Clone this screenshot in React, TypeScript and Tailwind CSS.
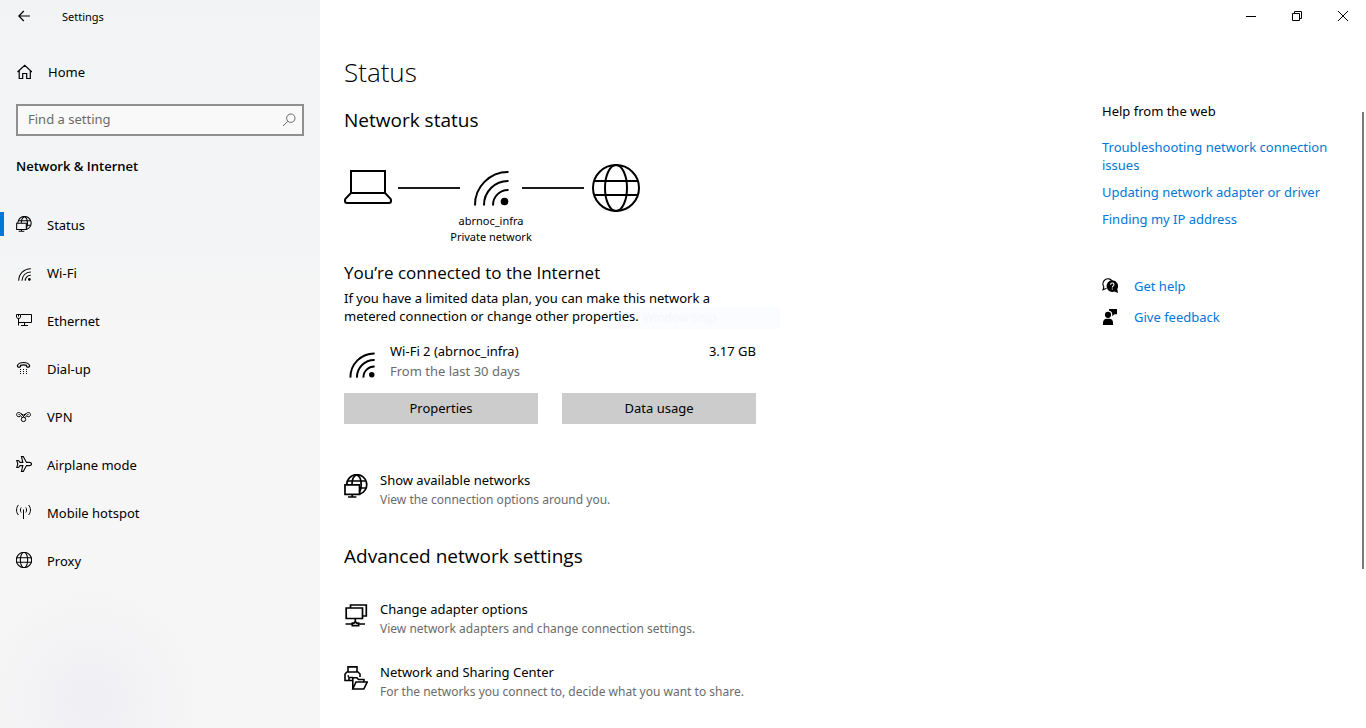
import type { ReactNode, SVGProps } from "react";

function Svg({ children, ...rest }: SVGProps<SVGSVGElement>) {
  return (
    <svg fill="none" stroke="currentColor" aria-hidden="true" {...rest}>
      {children}
    </svg>
  );
}

function WifiIcon({ className, weight }: { className: string; weight: number }) {
  return (
    <Svg viewBox="0 0 36 36" className={className} strokeWidth={weight}>
      <path d="M2 35.5A33 33 0 0 1 35.5 2M11 35.5A24 24 0 0 1 35.5 11M20 35.5A15 15 0 0 1 35.5 20" />
      <circle cx="31.5" cy="31.5" r="3.8" fill="currentColor" stroke="none" />
    </Svg>
  );
}

function GlobeIcon({ className, weight }: { className: string; weight: number }) {
  return (
    <Svg viewBox="0 0 48 48" className={className} strokeWidth={weight}>
      <circle cx="24" cy="24" r="23" />
      <ellipse cx="24" cy="24" rx="11" ry="23" />
      <path d="M2 17H46M2 31H46" />
    </Svg>
  );
}

function NetworkIcon({ className, weight }: { className: string; weight: number }) {
  return (
    <Svg viewBox="0 0 24 24" className={className} strokeWidth={weight}>
      <path d="M2.7 10.5A10 10 0 1 1 15.5 20.2" />
      <path d="M8 10.5C8 6 9.6 2 12.6 1C15.6 2 17.2 6 17.2 10.5C17.2 14 16.8 16.5 15.5 18.5M3.5 7H21.5M16 14H21.7" />
      <path d="M1 10.8H15.5V20.3H1ZM8.2 20.3V23M4 23H12.4" />
    </Svg>
  );
}

function LaptopIcon() {
  return (
    <Svg viewBox="0 0 48 48" className="size-12" strokeWidth="2">
      <path d="M7 7H41V29H7Z" />
      <path d="M7 29L1.6 34.6Q1 35.3 1 36.2V37Q1 39 3 39H45Q47 39 47 37V36.2Q47 35.3 46.4 34.6L41 29" />
    </Svg>
  );
}

const navItems: { label: string; icon: ReactNode }[] = [
  { label: "Status", icon: <NetworkIcon className="size-4" weight={1.6} /> },
  { label: "Wi-Fi", icon: <WifiIcon className="mt-1 ml-0.5 size-[13px]" weight={2.8} /> },
  {
    label: "Ethernet",
    icon: (
      <Svg viewBox="0 0 16 16" className="size-4">
        <path d="M5 2.5H15.5V10.5H2.5M8.5 10.5V13.5M5 13.5H12M2.5 6.5V13.5" />
        <path d="M.5 2.5H4.5V5L3.5 6.5H1.5L.5 5ZM2.5 2.5V4.5" />
      </Svg>
    ),
  },
  {
    label: "Dial-up",
    icon: (
      <Svg viewBox="0 0 16 16" className="size-4" strokeWidth="1.2">
        <path d="M1.5 6.5V5.2C2.6 3.3 5 2.5 7.500 2.500S12.400 3.300 13.500 5.200V6.500L12.800 7.200H11.200L10.500 6.500V5.400C8.800 4.700 6.200 4.700 4.500 5.400V6.500L3.800 7.200H2.200Z" />
        <path d="M4 9.500H5M7 9.500H8M10 9.500H11M4 11.500H5M7 11.500H8M10 11.500H11M4 13.500H5M7 13.500H8M10 13.500H11" />
      </Svg>
    ),
  },
  {
    label: "VPN",
    icon: (
      <Svg viewBox="0 0 16 16" className="size-4">
        <path d="M4.100 8.300C2.600 9.500 .6 8.400 .6 6.600C.6 4.200 3.800 3.800 5 5.700L8.300 9.300M11.100 8.300C12.600 9.400 14.500 8.400 14.500 6.600C14.500 4.200 11.400 3.800 10.200 5.700L6.700 9.300" />
        <path d="M2.500 6.500C3.200 5.900 3.800 6.700 4.300 7.400L6 9.500M12.600 6.500C11.900 5.900 11.400 6.700 10.900 7.400L9.200 9.500M5 5.700L7.500 7L10.200 5.700" />
        <circle cx="7.500" cy="11.400" r="2.200" />
      </Svg>
    ),
  },
  {
    label: "Airplane mode",
    icon: (
      <Svg viewBox="0 0 16 16" className="size-4" strokeWidth="1.1">
        <path d="M5.500 .6H7.300L10.500 6.400H13.500C14.700 6.400 15.500 7.200 15.500 8S14.700 9.600 13.500 9.600H10.500L7.300 15.400H5.500L6.800 9.600H4L2.500 11.500H.8L1.800 8L.8 4.500H2.500L4 6.400H6.800Z" />
      </Svg>
    ),
  },
  {
    label: "Mobile hotspot",
    icon: (
      <Svg viewBox="0 0 16 16" className="size-4">
        <path d="M7.500 5.500V15M5.200 3.500C4.200 4.800 4.200 7.200 5.200 8.500M9.800 3.500C10.800 4.800 10.800 7.200 9.800 8.500M2.500 1C-.1 3.500 -.1 8.500 2.500 11M12.500 1C15.100 3.500 15.100 8.500 12.500 11" />
      </Svg>
    ),
  },
  { label: "Proxy", icon: <GlobeIcon className="size-4" weight={3.2} /> },
];

function Sidebar() {
  return (
    <aside className="flex w-80 shrink-0 flex-col bg-[#f6f6f6] bg-[radial-gradient(circle_at_90px_700px,#efeff4,transparent_110px),linear-gradient(to_bottom,#f2f3f5,#f3f4f6_200px,transparent_340px)]">
      <header className="flex h-8 items-center">
        <button aria-label="Back" className="flex h-8 w-12 items-center justify-center">
          <Svg viewBox="0 0 12 12" className="size-3" strokeWidth="1.2">
            <path d="M12 6H.8M5.800 1L.8 6L5.800 11" />
          </Svg>
        </button>
        <span className="pt-0.5 pl-3.5 text-[11px] leading-4">Settings</span>
      </header>
      <a href="#home" className="mt-4 flex h-12 items-center gap-4 pl-4">
        <Svg viewBox="0 0 16 16" className="size-4" strokeWidth="1.200">
          <path d="M1.500 8L8.700 1.200L16 8M3.200 6.500V14.500H6.700V9.500H10.700V14.500H14.300V6.500" />
        </Svg>
        <span className="pt-0.5">Home</span>
      </a>
      <label className="mx-4 mt-2 flex h-8 items-center border-2 border-[#8f8f8f] bg-[#f9f9f9] pr-1.5 pl-2.5">
        <input
          type="text"
          aria-label="Find a setting"
          placeholder="Find a setting"
          className="min-w-0 flex-1 bg-transparent outline-none placeholder:text-[#6b6b6b]"
        />
        <Svg viewBox="0 0 14 14" className="size-3.5 text-[#6b6b6b]">
          <circle cx="8.800" cy="5.200" r="4.200" />
          <path d="M5.800 8.200L1 13" />
        </Svg>
      </label>
      <h2 className="mt-5 pl-4 font-['Open_Sans',sans-serif] leading-5 font-semibold">Network &amp; Internet</h2>
      <nav className="mt-[25px] flex flex-col">
        {navItems.map((item, i) => (
          <a
            key={item.label}
            href={"#" + item.label.toLowerCase().replace(" ", "-")}
            aria-current={i === 0 ? "page" : undefined}
            className="flex h-12 items-center"
          >
            <span className={i === 0 ? "mb-0.5 h-6 w-1 bg-[#0078d7]" : "mb-0.5 h-6 w-1"} />
            <span className="mb-0.5 ml-3 size-4 shrink-0">{item.icon}</span>
            <span className="ml-[15px] pt-0.5">{item.label}</span>
          </a>
        ))}
      </nav>
    </aside>
  );
}

function WindowControls() {
  return (
    <header className="flex h-8 justify-end">
      <button aria-label="Minimize" className="flex w-[46px] items-center justify-center">
        <Svg viewBox="0 0 10 10" className="size-2.5">
          <path d="M0 5.500H10" />
        </Svg>
      </button>
      <button aria-label="Restore" className="flex w-[46px] items-center justify-center">
        <Svg viewBox="0 0 10 10" className="size-2.5">
          <path d="M.5 2.500H7.500V9.500H.5ZM2.500 2.500V.5H9.500V7.500H7.500" />
        </Svg>
      </button>
      <button aria-label="Close" className="flex w-[46px] items-center justify-center">
        <Svg viewBox="0 0 10 10" className="size-2.5">
          <path d="M0 0L10 10M10 0L0 10" />
        </Svg>
      </button>
    </header>
  );
}

function SettingLink({ icon, title, detail }: { icon: ReactNode; title: string; detail: string }) {
  return (
    <a href="#details" className="flex gap-3">
      <span className="mt-1 size-6 shrink-0">{icon}</span>
      <span className="flex flex-col">
        <span className="leading-5">{title}</span>
        <span className="text-[12px] leading-[19px] text-[#6b6b6b]">{detail}</span>
      </span>
    </a>
  );
}

function StatusPanel() {
  return (
    <section className="min-w-0 flex-1 pt-5 pl-6">
      <h1 className="font-['Open_Sans',sans-serif] text-[26px] leading-10 font-light">Status</h1>
      <h2 className="mt-3.5 font-['Open_Sans',sans-serif] text-[19px] leading-7">Network status</h2>
      <figure className="mt-[30px] w-[296px]">
        <div className="flex items-center">
          <LaptopIcon />
          <span className="ml-1.5 h-0.5 flex-1 bg-[#1a1a1a]" />
          <span className="flex w-[62px] justify-center">
            <WifiIcon className="size-9" weight={2} />
          </span>
          <span className="mr-2 h-0.5 flex-1 bg-[#1a1a1a]" />
          <GlobeIcon className="size-12" weight={2} />
        </div>
        <figcaption className="mt-px flex flex-col pr-0.5 text-center text-[11px] leading-4">
          <span>abrnoc_infra</span>
          <span>Private network</span>
        </figcaption>
      </figure>

      <div className="relative w-[412px]">
        <h3 className="mt-4 font-['Open_Sans',sans-serif] text-[17px] leading-6">You’re connected to the Internet</h3>
        <p className="mt-1 leading-[18px]">
          If you have a limited data plan, you can make this network a metered connection or change other properties.
        </p>
        <div className="absolute top-[46px] left-[263px] -z-10 h-[22px] w-[173px] bg-[#fafcff] pl-9 text-[12px] leading-[22px] text-[#f5f7fa]">
          Window Snip
        </div>
        <div className="mt-4 flex">
          <WifiIcon className="mt-[11px] ml-[5px] size-[26px]" weight={2.7} />
          <div className="ml-[15px] flex flex-1 flex-col leading-5">
            <span>Wi-Fi 2 (abrnoc_infra)</span>
            <span className="text-[#6b6b6b]">From the last 30 days</span>
          </div>
          <span className="leading-5">3.17 GB</span>
        </div>
        <div className="mt-3 flex gap-6">
          <button className="h-[31px] flex-1 bg-[#ccc] pt-px">Properties</button>
          <button className="h-[31px] flex-1 bg-[#ccc] pt-px">Data usage</button>
        </div>
      </div>

      <div className="mt-[46px]">
        <SettingLink
          icon={<NetworkIcon className="size-6" weight={1.7} />}
          title="Show available networks"
          detail="View the connection options around you."
        />
      </div>

      <h2 className="mt-[33px] font-['Open_Sans',sans-serif] text-[19px] leading-7">Advanced network settings</h2>
      <div className="mt-[29px] flex flex-col gap-6">
        <SettingLink
          icon={
            <Svg viewBox="0 -1 24 24" className="size-6" strokeWidth="1.700">
              <path d="M6.500 4V1H22.300V12H19" />
              <path d="M2.200 4H18.500V14.500H2.200ZM11.300 14.500V18.500M1.500 20H8M15 20H21" />
              <path d="M8.300 21.600V19.200H10L11.300 17.800L12.800 19.200H14.600V21.600Z" />
            </Svg>
          }
          title="Change adapter options"
          detail="View network adapters and change connection settings."
        />
        <SettingLink
          icon={
            <Svg viewBox="0 0 24 24" className="size-6" strokeWidth="1.600">
              <path d="M4 6V.9H13V6M8 14.500H1V8L3 6H14L16 8V11" />
              <path d="M3.500 10H5M5 14V11.500H9" />
              <path d="M8.800 23V11.800H13L14.500 13.500H20V16M8.800 23L12 16H23.200L19.800 23Z" />
            </Svg>
          }
          title="Network and Sharing Center"
          detail="For the networks you connect to, decide what you want to share."
        />
      </div>
    </section>
  );
}

function HelpPanel() {
  return (
    <aside className="w-[238px] shrink-0 pt-[69px]">
      <h2 className="leading-5">Help from the web</h2>
      <div className="mt-[17px] flex flex-col gap-[9px] leading-[18px] text-[#0078d7]">
        <a href="#troubleshooting">Troubleshooting network connection issues</a>
        <a href="#driver">Updating network adapter or driver</a>
        <a href="#ip-address">Finding my IP address</a>
      </div>
      <div className="mt-12 flex flex-col gap-[11px] leading-5 text-[#0078d7]">
        <a href="#help" className="flex items-center gap-4">
          <Svg viewBox="0 0 16 16" className="size-4 text-black" strokeWidth="1.100">
            <path d="M4.500 10.300L1 11.800L1.800 8.800A5 5 0 1 1 10.200 3" />
            <path d="M10.200 2.300A5.800 5.800 0 0 1 15.300 11L16 15L12.500 13.500A5.800 5.800 0 1 1 10.200 2.300Z" fill="currentColor" stroke="none" />
            <path d="M8.600 6.700C8.600 4.400 12 4.500 12 6.600C12 7.900 10.300 7.900 10.300 9.500M10.300 10.500V11.600" stroke="white" />
          </Svg>
          Get help
        </a>
        <a href="#feedback" className="flex items-center gap-4">
          <Svg viewBox="0 1 16 16" className="size-4 text-black">
            <g fill="currentColor" stroke="none">
              <circle cx="6" cy="6.800" r="3.100" />
              <path d="M1 17V14.500C1 12 2.800 10.700 4.500 10.700H7.500C9.500 10.700 11 12 11 14.500V17Z" />
              <path d="M7 1H15V6.200H12.500L10.300 8.300V6C10.100 4 8.800 2.900 7 2.700Z" />
            </g>
          </Svg>
          Give feedback
        </a>
      </div>
    </aside>
  );
}

export default function App() {
  return (
    <div className="flex min-h-screen bg-white font-['Noto_Sans',sans-serif] text-[13px] text-black">
      <Sidebar />
      <main className="isolate flex min-w-0 flex-1 flex-col">
        <WindowControls />
        <div className="flex flex-1">
          <StatusPanel />
          <HelpPanel />
          <div className="mt-20 mr-0.5 ml-[22px] h-[457px] w-0.5 shrink-0 bg-[#7a7a7a]" />
        </div>
      </main>
    </div>
  );
}
